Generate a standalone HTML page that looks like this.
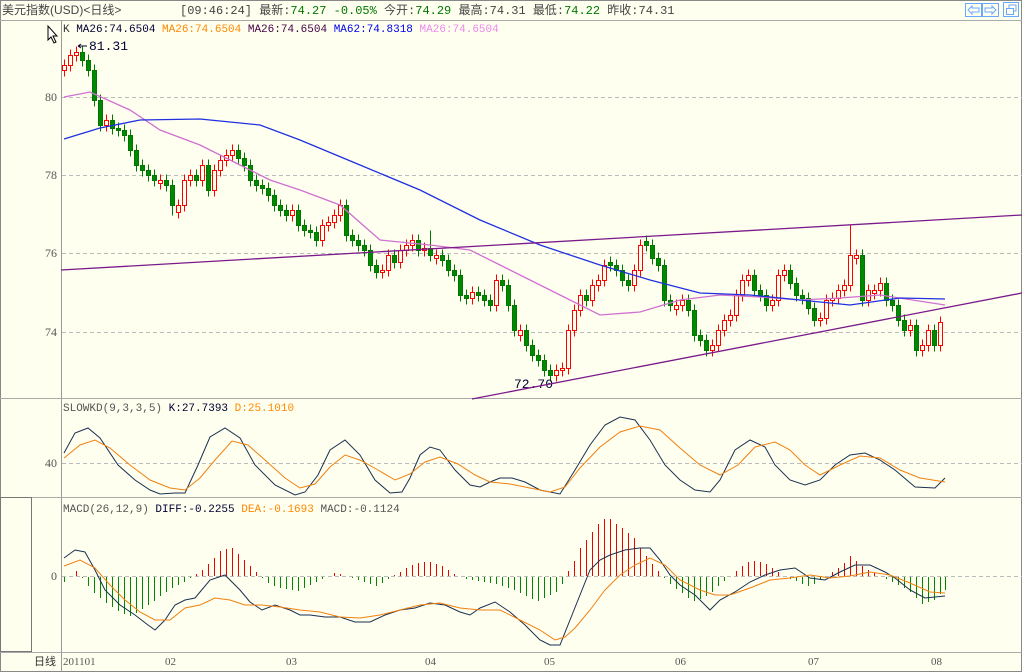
<!DOCTYPE html>
<html><head><meta charset="utf-8"><style>
html,body{margin:0;padding:0;background:#FFFFF0;width:1022px;height:672px;overflow:hidden}
svg{display:block;font-family:"Liberation Mono","Noto Sans CJK SC",monospace}
.t{font-size:11px}
.c{shape-rendering:crispEdges}
</style></head><body>
<svg width="1022" height="672" xmlns="http://www.w3.org/2000/svg">
<rect x="0" y="0" width="1022" height="672" fill="#FFFFF0"/>
<rect x="0.5" y="0.5" width="1021" height="671" fill="none" stroke="#888"/>
<line x1="0" y1="20.5" x2="1022" y2="20.5" stroke="#aaa"/>
<text x="2" y="14" font-size="12" fill="#444" font-family="'Liberation Sans','Noto Sans CJK SC',sans-serif">美元指数(USD)&lt;日线&gt;</text>
<text x="180" y="14" font-size="12" font-family="'Liberation Mono','Noto Sans CJK SC',monospace"><tspan fill="#444">[09:46:24] 最新:</tspan><tspan fill="#070">74.27 -0.05%</tspan><tspan fill="#444"> 今开:</tspan><tspan fill="#070">74.29</tspan><tspan fill="#444"> 最高:74.31  最低:</tspan><tspan fill="#070">74.22</tspan><tspan fill="#444"> 昨收:74.31</tspan></text>
<g fill="none" stroke="#6aa8ff"><rect x="965.5" y="3.5" width="16" height="13"/><rect x="982.5" y="3.5" width="16" height="13"/><rect x="1003.5" y="2.5" width="15" height="14"/></g>
<g stroke="#6aa8ff" fill="none"><path d="M968 10 l4-4 v2 h7 v4 h-7 v2z"/><path d="M996 10 l-4-4 v2 h-7 v4 h7 v2z"/><rect x="1006.5" y="8.5" width="7" height="6"/><path d="M1009 8 v-3 h7 v6 h-2"/></g>
<line x1="61.5" y1="20" x2="61.5" y2="672" stroke="#999"/>
<line x1="0" y1="398.5" x2="1022" y2="398.5" stroke="#aaa"/>
<line x1="0" y1="497.5" x2="1022" y2="497.5" stroke="#aaa"/>
<line x1="0" y1="652.5" x2="1022" y2="652.5" stroke="#aaa"/>
<rect x="0.5" y="497.5" width="31" height="154" fill="none" stroke="#777"/>
<g stroke="#bbb" stroke-dasharray="4,3"><line x1="62" y1="97.5" x2="1022" y2="97.5"/><line x1="62" y1="175.5" x2="1022" y2="175.5"/><line x1="62" y1="253.5" x2="1022" y2="253.5"/><line x1="62" y1="332.5" x2="1022" y2="332.5"/><line x1="62" y1="463.5" x2="1022" y2="463.5"/><line x1="62" y1="576.5" x2="1022" y2="576.5"/></g>
<g font-size="12" fill="#555" font-family="'Liberation Serif',serif" text-anchor="end"><text x="57" y="101">80</text><text x="57" y="179">78</text><text x="57" y="257">76</text><text x="57" y="336">74</text><text x="57" y="467">40</text><text x="57" y="580">0</text></g>
<path d="M48 26 v14 l3-3 l3 6 l2-1 l-3-6 h4z" fill="#fff" stroke="#000"/>
<text x="63" y="32" class="t"><tspan fill="#333">K </tspan><tspan fill="#003">MA26:74.6504 </tspan><tspan fill="#f80">MA26:74.6504 </tspan><tspan fill="#404">MA26:74.6504 </tspan><tspan fill="#00e">MA62:74.8318 </tspan><tspan fill="#e8e">MA26:74.6504</tspan></text>
<text x="63" y="411" class="t"><tspan fill="#555">SLOWKD(9,3,3,5) </tspan><tspan fill="#003">K:27.7393 </tspan><tspan fill="#f80">D:25.1010</tspan></text>
<text x="63" y="512" class="t"><tspan fill="#555">MACD(26,12,9) </tspan><tspan fill="#003">DIFF:-0.2255 </tspan><tspan fill="#f80">DEA:-0.1693 </tspan><tspan fill="#555">MACD:-0.1124</tspan></text>

<g class="c" transform="translate(0.5,0.5)">
<path fill="none" stroke="#f00" d="M64 59V76M70 49V71M76 46V61M106 114V131M160 174V189M178 199V218M184 174V211M190 169V186M202 159V186M214 164V196M220 154V176M226 149V166M232 144V161M292 204V221M322 219V246M328 216V231M334 209V228M340 199V221M382 264V278M388 249V276M400 244V268M406 239V256M412 234V251M424 242V256M436 249V264M472 286V304M496 274V311M520 324V341M556 364V381M562 362V376M568 324V374M574 304V336M580 289V316M592 279V306M598 274V291M604 259V286M634 264V291M640 239V276M676 299V315M682 294V311M712 339V356M718 324V351M724 314V336M730 309V326M736 289V321M742 274V301M748 269V286M772 294V311M778 269V306M784 264V281M820 312V326M826 294V324M832 292V306M838 284V304M844 279V296M850 225V291M856 249V264M868 284V306M874 284V299M880 277V296M910 319V336M922 339V356M928 324V351M940 316V351"/>
<path fill="#FFFFF0" stroke="#f00" d="M62 65H66V70H62ZM68 55H72V65H68ZM74 52H78V55H74ZM104 120H108V125H104ZM158 180H162V183H158ZM176 205H180V212H176ZM182 180H186V205H182ZM188 175H192V180H188ZM200 165H204V180H200ZM212 170H216V190H212ZM218 160H222V170H218ZM224 155H228V160H224ZM230 150H234V155H230ZM290 210H294V215H290ZM320 225H324V240H320ZM326 222H330V225H326ZM332 215H336V222H332ZM338 205H342V215H338ZM380 270H384V272H380ZM386 255H390V270H386ZM398 250H402V262H398ZM404 245H408V250H404ZM410 240H414V245H410ZM422 248H426V250H422ZM434 255H438V258H434ZM470 292H474V298H470ZM494 280H498V305H494ZM518 330H522V335H518ZM554 370H558V375H554ZM560 368H564V370H560ZM566 330H570V368H566ZM572 310H576V330H572ZM578 295H582V310H578ZM590 285H594V300H590ZM596 280H600V285H596ZM602 265H606V280H602ZM632 270H636V285H632ZM638 245H642V270H638ZM674 305H678V309H674ZM680 300H684V305H680ZM710 345H714V350H710ZM716 330H720V345H716ZM722 320H726V330H722ZM728 315H732V320H728ZM734 295H738V315H734ZM740 280H744V295H740ZM746 275H750V280H746ZM770 300H774V305H770ZM776 275H780V300H776ZM782 270H786V275H782ZM818 318H822V320H818ZM824 300H828V318H824ZM830 298H834V300H830ZM836 290H840V298H836ZM842 285H846V290H842ZM848 255H852V285H848ZM854 255H858V258H854ZM866 290H870V300H866ZM872 290H876V293H872ZM878 283H882V290H878ZM908 325H912V330H908ZM920 345H924V350H920ZM926 330H930V345H926ZM938 322H942V345H938Z"/>
<path fill="none" stroke="#070" d="M82 46V66M88 54V76M94 64V106M100 94V131M112 114V134M118 122V136M124 124V141M130 129V156M136 144V171M142 159V176M148 164V181M154 169V186M166 174V191M172 179V215M196 169V186M208 159V196M238 144V164M244 152V171M250 159V186M256 174V191M262 179V194M268 182V201M274 189V211M280 199V216M286 204V221M298 204V231M304 219V236M310 224V238M316 226V246M346 199V241M352 229V246M358 234V251M364 239V256M370 244V271M376 259V278M394 249V268M418 234V256M430 230V261M442 249V266M448 254V276M454 264V281M460 269V301M466 289V304M478 286V301M484 289V306M490 294V311M502 274V291M508 279V311M514 299V336M526 324V351M532 339V361M538 349V366M544 354V376M550 364V381M586 289V306M610 256V271M616 259V276M622 264V286M628 274V291M646 235V251M652 239V264M658 252V271M664 259V306M670 294V311M688 294V316M694 304V341M700 329V346M706 334V356M754 269V296M760 284V301M766 289V311M790 264V289M796 277V301M802 289V304M808 292V314M814 302V326M862 249V306M886 277V306M892 294V311M898 299V326M904 314V336M916 319V356M934 324V351"/>
<path fill="#080" stroke="#070" d="M80 52H84V60H80ZM86 60H90V70H86ZM92 70H96V100H92ZM98 100H102V125H98ZM110 120H114V128H110ZM116 128H120V130H116ZM122 130H126V135H122ZM128 135H132V150H128ZM134 150H138V165H134ZM140 165H144V170H140ZM146 170H150V175H146ZM152 175H156V180H152ZM164 180H168V185H164ZM170 185H174V205H170ZM194 175H198V180H194ZM206 165H210V190H206ZM236 150H240V158H236ZM242 158H246V165H242ZM248 165H252V180H248ZM254 180H258V185H254ZM260 185H264V188H260ZM266 188H270V195H266ZM272 195H276V205H272ZM278 205H282V210H278ZM284 210H288V215H284ZM296 210H300V225H296ZM302 225H306V230H302ZM308 230H312V232H308ZM314 232H318V240H314ZM344 205H348V235H344ZM350 235H354V240H350ZM356 240H360V245H356ZM362 245H366V250H362ZM368 250H372V265H368ZM374 265H378V272H374ZM392 255H396V262H392ZM416 240H420V250H416ZM428 248H432V255H428ZM440 255H444V260H440ZM446 260H450V270H446ZM452 270H456V275H452ZM458 275H462V295H458ZM464 295H468V298H464ZM476 292H480V295H476ZM482 295H486V300H482ZM488 300H492V305H488ZM500 280H504V285H500ZM506 285H510V305H506ZM512 305H516V330H512ZM524 330H528V345H524ZM530 345H534V355H530ZM536 355H540V360H536ZM542 360H546V370H542ZM548 370H552V375H548ZM584 295H588V300H584ZM608 262H612V265H608ZM614 265H618V270H614ZM620 270H624V280H620ZM626 280H630V285H626ZM644 241H648V245H644ZM650 245H654V258H650ZM656 258H660V265H656ZM662 265H666V300H662ZM668 300H672V305H668ZM686 300H690V310H686ZM692 310H696V335H692ZM698 335H702V340H698ZM704 340H708V350H704ZM752 275H756V290H752ZM758 290H762V295H758ZM764 295H768V305H764ZM788 270H792V283H788ZM794 283H798V295H794ZM800 295H804V298H800ZM806 298H810V308H806ZM812 308H816V320H812ZM860 255H864V300H860ZM884 283H888V300H884ZM890 300H894V305H890ZM896 305H900V320H896ZM902 320H906V330H902ZM914 325H918V350H914ZM932 330H936V345H932Z"/>
</g>

<text x="89" y="50" font-size="13" fill="#003">81.31</text>
<path d="M78 46 h9 M78 46 l3-2 M78 46 l3 2" stroke="#003"/>
<text x="514" y="388" font-size="13" fill="#003">72.70</text>
<polyline fill="none" stroke="#d070d0" stroke-width="1.3" points="64,97 90,92 130,110 160,130 200,145 230,160 270,180 300,190 340,205 380,240 430,245 470,250 500,265 540,285 580,305 600,315 640,312 680,300 720,295 760,297 800,300 840,298 880,295 945,305"/>
<polyline fill="none" stroke="#2030e0" stroke-width="1.3" points="64,139 100,128 140,120 200,119 260,125 300,140 360,165 420,190 480,220 540,245 600,265 650,280 700,293 750,295 800,300 850,305 900,298 945,299"/>
<line x1="61" y1="270" x2="1022" y2="215" stroke="#7a1a8a" stroke-width="1.3"/>
<line x1="472" y1="399" x2="1022" y2="293" stroke="#7a1a8a" stroke-width="1.3"/>

<g font-size="11" fill="#555" font-family="'Liberation Serif','Noto Sans CJK SC',serif"><text x="34" y="665" fill="#333">日线</text><text x="63" y="665">201101</text><text x="165" y="665">02</text><text x="286" y="665">03</text><text x="425" y="665">04</text><text x="544" y="665">05</text><text x="675" y="665">06</text><text x="808" y="665">07</text><text x="931" y="665">08</text></g>

<polyline fill="none" stroke="#1a3050" points="64,453 75,433 88,428 100,438 118,465 135,480 150,490 160,494 175,493 185,493 198,465 210,437 225,428 240,438 255,465 275,485 295,495 305,492 318,475 330,450 345,440 360,455 375,480 390,493 402,492 410,478 420,455 430,447 440,450 455,470 470,485 480,487 490,482 500,478 512,478 525,482 540,490 560,494 575,470 590,445 605,425 620,417 635,420 650,440 665,465 680,480 695,490 710,492 720,480 735,450 750,440 765,447 775,465 790,480 805,485 820,480 835,465 850,455 865,453 880,460 895,470 915,487 935,488 945,478"/>
<polyline fill="none" stroke="#f08010" points="64,458 80,445 95,440 110,448 130,465 150,480 170,488 185,490 200,478 215,460 232,441 248,445 265,460 285,478 300,488 315,484 330,467 345,455 360,460 378,470 395,480 410,474 425,462 440,457 458,464 475,475 490,482 510,484 530,488 550,492 565,487 580,468 600,447 620,432 640,426 660,430 680,448 700,465 720,475 738,465 755,447 775,442 790,450 805,465 820,475 840,465 860,456 880,458 900,470 920,478 945,482"/>

<g class="c" transform="translate(0.5,0)">
<path stroke="#e00" fill="none" d="M76 576V571M196 576V574M202 576V570M208 576V564M214 576V558M220 576V551M226 576V549M232 576V548M238 576V554M244 576V560M250 576V566M256 576V572M334 576V573M340 576V574M394 576V575M400 576V572M406 576V568M412 576V565M418 576V563M424 576V562M430 576V562M436 576V564M442 576V566M448 576V570M454 576V574M568 576V571M574 576V561M580 576V548M586 576V540M592 576V532M598 576V524M604 576V519M610 576V519M616 576V524M622 576V528M628 576V533M634 576V538M640 576V548M646 576V556M652 576V564M658 576V571M736 576V571M742 576V566M748 576V562M754 576V561M760 576V562M766 576V564M772 576V568M778 576V572M832 576V572M838 576V568M844 576V563M850 576V556M856 576V561M862 576V566M868 576V570M874 576V573"/>
<path stroke="#080" fill="none" d="M64 577V582M82 577V578M88 577V586M94 577V593M100 577V598M106 577V603M112 577V607M118 577V611M124 577V614M130 577V616M136 577V613M142 577V609M148 577V605M154 577V601M160 577V596M166 577V592M172 577V588M178 577V585M184 577V582M190 577V578M262 577V578M268 577V583M274 577V586M280 577V588M286 577V589M292 577V590M298 577V591M304 577V588M310 577V585M316 577V582M322 577V579M352 577V578M358 577V580M364 577V582M370 577V584M376 577V586M382 577V583M388 577V579M460 577V577M466 577V579M472 577V580M478 577V581M484 577V582M490 577V583M496 577V584M502 577V586M508 577V588M514 577V590M520 577V593M526 577V596M532 577V599M538 577V601M544 577V598M550 577V595M556 577V592M562 577V584M664 577V578M670 577V584M676 577V589M682 577V593M688 577V598M694 577V601M700 577V599M706 577V596M712 577V592M718 577V586M724 577V581M790 577V579M796 577V581M802 577V584M808 577V586M814 577V584M820 577V580M886 577V579M892 577V582M898 577V585M904 577V588M910 577V592M916 577V598M922 577V604M928 577V602M934 577V600M940 577V594M945 577V590"/>
</g>
<polyline fill="none" stroke="#1a3050" points="64,558 75,550 85,552 95,570 105,590 120,605 135,615 148,625 155,630 165,620 175,605 185,600 195,598 210,580 225,575 240,590 250,602 262,610 275,605 290,610 300,615 310,615 325,617 340,617 355,622 370,622 385,615 400,610 415,608 430,603 445,605 460,612 470,615 480,608 495,602 510,612 525,625 540,640 550,645 560,645 570,620 580,595 590,570 600,560 610,555 625,550 640,548 650,548 660,560 670,575 680,585 695,595 710,610 720,600 735,592 750,582 765,575 780,570 795,568 810,578 825,580 840,572 855,565 870,565 885,572 895,578 910,590 925,598 945,596"/>
<polyline fill="none" stroke="#f08010" points="64,566 80,560 95,568 110,585 125,600 140,612 155,620 170,620 185,608 200,605 215,598 230,600 245,605 262,605 280,607 300,610 320,612 340,617 360,618 380,615 400,610 420,605 440,603 460,608 480,610 500,610 520,620 540,630 555,640 565,637 575,628 590,610 605,590 620,575 635,565 650,558 665,565 680,580 700,590 715,595 730,595 750,588 770,580 790,578 810,575 830,578 850,576 870,572 890,575 910,583 930,592 945,593"/>
</svg>
</body></html>
